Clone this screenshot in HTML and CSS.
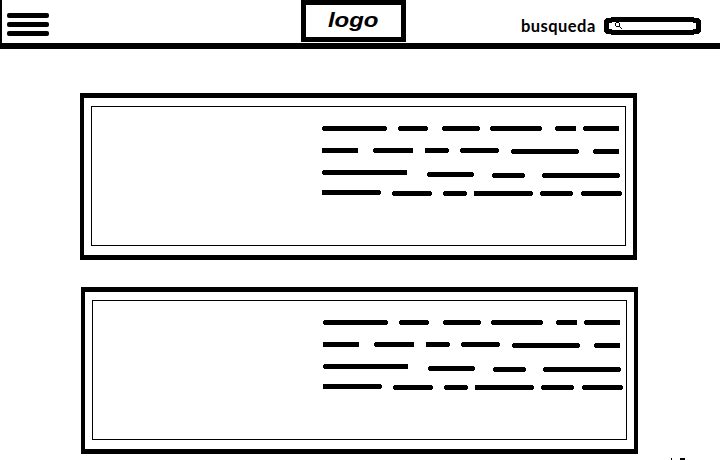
FILE: index.html
```html
<!DOCTYPE html>
<html lang="es">
<head>
<meta charset="utf-8">
<title>Wireframe</title>
<link rel="stylesheet" href="styles.css">
</head>
<body>
<header class="header">
  <div class="menu"><span class="bar"></span><span class="bar"></span><span class="bar"></span></div>
  <div class="logo"><span class="logo-text">logo</span></div>
  <div class="search">
    <span class="search-label">busqueda</span>
    <svg class="search-box" width="97" height="18" viewBox="0 0 97 18" shape-rendering="crispEdges">
      <path fill="#000" d="M7 0H90V1H95V2H96V3H97V15H96V16H95V17H90V18H7V17H2V16H1V15H0V3H1V2H2V1H7Z"/>
      <path fill="#fff" d="M8 5H89V6H92V12H89V13H8V12H5V6H8Z"/>
      <path fill="#000" d="M12 5h3v1h-3zM11 6h1v3h-1zM15 6h1v3h-1zM12 9h3v1h-3zM15 9h1v1h-1zM16 10h1v1h-1zM17 11h1v1h-1z"/>
    </svg>
  </div>
</header>
<main class="list">
  <article class="card">
    <div class="card-inner">
      <svg class="scribble" width="300" height="70" viewBox="0 0 300 70" shape-rendering="crispEdges">
        <defs>
          <g id="lines" fill="none" stroke="#000">
            <path stroke-width="5" d="M1 2.5H64M77 2.5H105M121 2.5H157M169 2.5H219M234 2.5H254M262 2.5H297
              M0 24.5H36M52 24.5H91M103 24.5H126M139 24.5H176M190 25.5H256M272 25.5H297
              M1 46.5H85M106 48.5H151M171 49.5H202M221 49.5H297
              M0 66.5H58M71 67.5H109M122 67.5H144M152 67.5H210M219 67.5H250M260 67.5H299"/>
            <path stroke-width="3" d="M0 2.5H65M76 2.5H106M120 2.5H158M168 2.5H220M233 2.5H254M261 2.5H297
              M51 24.5H91M103 24.5H127M138 24.5H177M189 25.5H257M271 25.5H297
              M0 46.5H85M105 48.5H152M170 49.5H203M220 49.5H298
              M0 66.5H59M70 67.5H110M121 67.5H145M152 67.5H211M218 67.5H251M259 67.5H300"/>
          </g>
        </defs>
        <use href="#lines"/>
      </svg>
    </div>
  </article>
  <article class="card card-shifted">
    <div class="card-inner">
      <svg class="scribble" width="300" height="70" viewBox="0 0 300 70" shape-rendering="crispEdges"><use href="#lines"/></svg>
    </div>
  </article>
</main>
<footer class="footer"><span class="tick"></span><span class="dot"></span></footer>
</body>
</html>
```
FILE: styles.css
```css
* { box-sizing: border-box; }
body {
  margin: 0;
  width: 720px;
  height: 460px;
  overflow: hidden;
  display: flex;
  flex-direction: column;
  background: #fff;
  color: #000;
}
.header {
  height: 49px;
  flex: none;
  display: flex;
  align-items: flex-start;
  border-left: 2px solid #000;
  border-bottom: 6px solid #000;
}
.menu {
  width: 42px;
  margin: 13px 252px 0 5px;
  display: flex;
  flex-direction: column;
  gap: 4px;
}
.bar {
  height: 5px;
  background: #000;
  border-radius: 2px;
}
.logo {
  width: 105px;
  height: 42px;
  border: 5px solid #000;
  font: italic bold 21px/29px "Liberation Sans", Arial, sans-serif;
  text-align: center;
}
.logo-text {
  display: inline-block;
  transform: scaleX(1.14);
}
.search {
  margin: 17px 0 0 115px;
  display: flex;
}
.search-label {
  width: 83px;
  font: bold 16.5px/18px Lato, sans-serif;
  letter-spacing: 0.45px;
}
.search-box { display: block; }
.list {
  padding: 44px 0 0 80px;
  display: flex;
  flex-direction: column;
  gap: 27px;
}
.card {
  width: 557px;
  height: 167px;
  border: solid #000;
  border-width: 5px 4px;
  padding: 8px 7px 9px;
}
.card-shifted { margin-left: 1px; }
.card-inner {
  width: 535px;
  height: 140px;
  border: 1px solid #000;
  padding: 19px 0 0 230px;
}
.scribble { display: block; }
.footer {
  display: flex;
  gap: 8px;
  margin-top: 4px;
  padding-left: 671px;
}
.tick, .dot { height: 2px; background: #000; }
.tick { width: 1px; }
.dot { width: 5px; }
```
